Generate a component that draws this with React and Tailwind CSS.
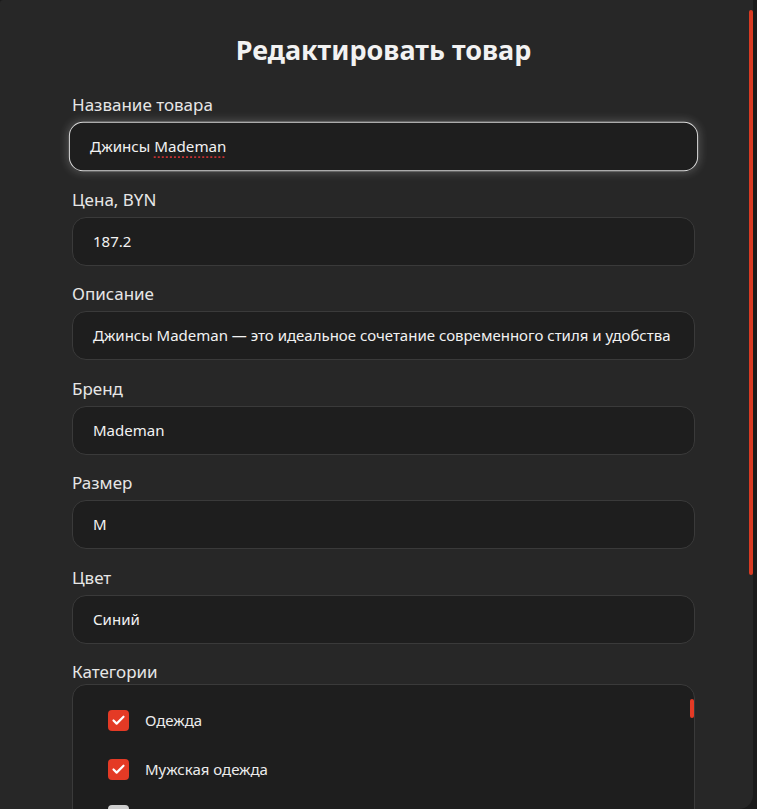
import { Check } from "lucide-react";

const fields = [
  { label: "Название товара", value: "Джинсы Mademan", focused: true },
  { label: "Цена, BYN", value: "187.2" },
  {
    label: "Описание",
    value: "Джинсы Mademan — это идеальное сочетание современного стиля и удобства",
  },
  { label: "Бренд", value: "Mademan" },
  { label: "Размер", value: "M" },
  { label: "Цвет", value: "Синий" },
];

const categories = [
  { name: "Одежда", checked: true },
  { name: "Мужская одежда", checked: true },
];

const Field = ({ label, value, focused }) => (
  <div className="mb-[16.5px]">
    <div className="text-[17px] leading-[24px] text-[#e6e6e6] mb-[5px]">{label}</div>
    <div
      className={`h-[49px] rounded-[14px] bg-[#1e1e1e] flex items-center px-[20px] text-[15px] text-[#f2f2f2] ${
        focused
          ? "border-[1.5px] border-[#d8d8d8] scale-[1.01] shadow-[0_0_8px_2px_rgba(255,255,255,0.18)]"
          : "border border-[#3a3a3a]"
      }`}
    >
      {focused ? (
        <span>
          Джинсы{" "}
          <span className="underline decoration-dotted decoration-[#d33] underline-offset-4">Mademan</span>
        </span>
      ) : (
        <span className="whitespace-nowrap">{value}</span>
      )}
    </div>
  </div>
);

const App = () => {
  return (
    <div
      className="w-[757px] h-[809px] bg-[#1b1b1b] overflow-hidden relative"
      style={{ fontFamily: "'Noto Sans', sans-serif" }}
    >
      <div className="w-[753px] h-[809px] bg-[#272727] rounded-br-[14px] rounded-tl-[3px] overflow-hidden relative">
        <div className="pt-[31px] pl-[72px] pr-[58px]">
          <h1 className="text-center text-[27px] leading-[38px] font-bold text-[#f2f2f2] mb-[24px]">
            Редактировать товар
          </h1>
          {fields.map((f) => (
            <Field key={f.label} {...f} />
          ))}
          <div className="text-[17px] leading-[24px] text-[#e6e6e6]">Категории</div>
          <div className="relative h-[200px] rounded-[14px] border border-[#3a3a3a] bg-[#1e1e1e] pt-[11px] pl-[35px]">
            {categories.map((c) => (
              <div key={c.name} className="flex items-center gap-[16px] h-[49px]">
                <div className="w-[21px] h-[21px] rounded-[4px] flex items-center justify-center bg-[#e43a25]">
                  <Check size={15} strokeWidth={3.5} color="#fff" />
                </div>
                <span className="text-[15px] text-[#ececec]">{c.name}</span>
              </div>
            ))}
            <div className="mt-[11px] w-[21px] h-[21px] rounded-[4px] bg-[#cfcfcf]" />
            <div className="absolute right-[0px] top-[14px] w-[4px] h-[19px] rounded-full bg-[#e43a25]" />
          </div>
        </div>
        <div className="absolute right-[0px] top-[10px] w-[4px] h-[565px] rounded-full bg-[#d93a22]" />
      </div>
    </div>
  );
};

export default App;
